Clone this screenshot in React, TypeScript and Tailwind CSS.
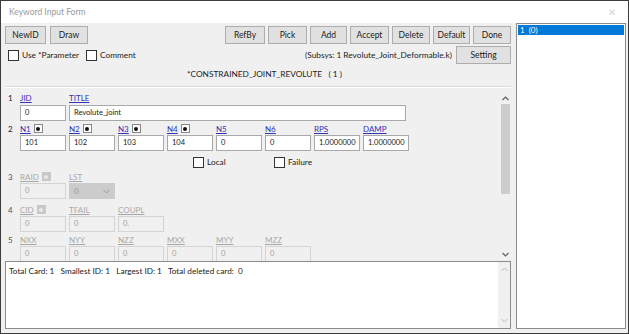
import React from "react";

const font = "font-['Lato','Noto_Sans',sans-serif]";

function Btn({ label, w }: { label: string; w: string }) {
  return (
    <div
      className={`${w} h-[18px] flex items-center justify-center bg-[#e1e1e1] border border-[#adadad] text-[8.5px] text-[#222]`}
    >
      {label}
    </div>
  );
}

function Check({ label, w }: { label: string; w?: string }) {
  return (
    <div className={`${w ?? ""} flex items-center gap-[3px] text-[8.3px] text-[#222]`}>
      <div className="w-[11px] h-[11px] bg-white border border-[#333]" />
      <span>{label}</span>
    </div>
  );
}

type Field = { name: string; value?: string; pick?: boolean; disabled?: boolean; select?: boolean };

function Label({ f }: { f: Field }) {
  return (
    <div className="w-[49px] h-[11px] flex items-center gap-[3px] text-[8px] leading-none">
      <span className={`underline ${f.disabled ? "text-[#a8a8a8]" : "text-[#3232b4]"}`}>
        {f.name}
      </span>
      {f.pick && (
        <span
          className={`w-[9px] h-[9px] flex items-center justify-center border ${
            f.disabled ? "bg-[#c8c8c8] border-[#c8c8c8]" : "bg-white border-[#888]"
          }`}
        >
          <span
            className={`w-[4px] h-[4px] rounded-full ${f.disabled ? "bg-[#e8e8e8]" : "bg-[#111]"}`}
          />
        </span>
      )}
    </div>
  );
}

function Input({ f }: { f: Field }) {
  if (f.select) {
    return (
      <div className="w-[46px] h-[16px] mr-[3px] flex items-center justify-between px-[4px] bg-[#cccccc] border border-[#cccccc] text-[8px] text-[#999]">
        <span>{f.value}</span>
        <svg width="7" height="5" viewBox="0 0 7 5">
          <path d="M0.5 1 L3.5 4 L6.5 1" fill="none" stroke="#999" strokeWidth="1" />
        </svg>
      </div>
    );
  }
  return (
    <div
      className={`w-[46px] h-[16px] mr-[3px] flex items-center px-[4px] border text-[7.5px] ${
        f.disabled
          ? "bg-[#f0f0f0] border-[#d4d4d4] text-[#a0a0a0]"
          : "bg-white border-[#a8a8a8] text-[#222]"
      }`}
    >
      {f.value}
    </div>
  );
}

function CardRow({ n, fields, disabled }: { n: string; fields: Field[]; disabled?: boolean }) {
  return (
    <div className="flex flex-col shrink-0">
      <div className="flex items-center h-[11px]">
        <span className={`w-[15px] pl-[3px] text-[8px] ${disabled ? "text-[#555]" : "text-[#222]"}`}>
          {n}
        </span>
        {fields.map((f) => (
          <Label key={f.name} f={f} />
        ))}
      </div>
      <div className="flex mt-[1px] pl-[15px]">
        {fields.map((f) => (
          <Input key={f.name} f={f} />
        ))}
      </div>
    </div>
  );
}

export default function App() {
  const row2: Field[] = [
    { name: "N1", value: "101", pick: true },
    { name: "N2", value: "102", pick: true },
    { name: "N3", value: "103", pick: true },
    { name: "N4", value: "104", pick: true },
    { name: "N5", value: "0" },
    { name: "N6", value: "0" },
    { name: "RPS", value: "1.0000000" },
    { name: "DAMP", value: "1.0000000" },
  ];
  const row3: Field[] = [
    { name: "RAID", value: "0", pick: true, disabled: true },
    { name: "LST", value: "0", disabled: true, select: true },
  ];
  const row4: Field[] = [
    { name: "CID", value: "0", pick: true, disabled: true },
    { name: "TFAIL", value: "0", disabled: true },
    { name: "COUPL", value: "0.", disabled: true },
  ];
  const row5: Field[] = ["NXX", "NYY", "NZZ", "MXX", "MYY", "MZZ"].map((name) => ({
    name,
    value: "0",
    disabled: true,
  }));

  return (
    <div
      className={`w-[629px] h-[334px] flex flex-col bg-[#f0f0f0] border border-[#3c3c3c] overflow-hidden ${font}`}
    >
      {/* title bar */}
      <div className="h-[22px] flex items-center justify-between bg-white px-[8px]">
        <span className="text-[8.5px] text-[#9a9a9a]">Keyword Input Form</span>
        <span className="text-[10px] text-[#d4d4d4] mr-[4px]">✕</span>
      </div>

      <div className="flex-1 flex min-h-0">
        {/* left column */}
        <div className="w-[511px] flex flex-col pl-[4px]">
          <div className="flex items-center justify-between mt-[3px] pr-[1px]">
            <div className="flex gap-[4px]">
              <Btn label="NewID" w="w-[41px]" />
              <Btn label="Draw" w="w-[38px]" />
            </div>
            <div className="flex gap-[3px]">
              <Btn label="RefBy" w="w-[40px]" />
              <Btn label="Pick" w="w-[39px]" />
              <Btn label="Add" w="w-[37px]" />
              <Btn label="Accept" w="w-[39px]" />
              <Btn label="Delete" w="w-[38px]" />
              <Btn label="Default" w="w-[37px]" />
              <Btn label="Done" w="w-[38px]" />
            </div>
          </div>

          <div className="flex items-center justify-between mt-[2px] pl-[3px] pr-[1px]">
            <div className="flex">
              <Check label="Use *Parameter" w="w-[78px]" />
              <Check label="Comment" />
            </div>
            <div className="flex items-center gap-[4px]">
              <span className="text-[8.3px] text-[#222]">(Subsys: 1 Revolute_Joint_Deformable.k)</span>
              <Btn label="Setting" w="w-[55px]" />
            </div>
          </div>

          <div className="h-[20px] flex items-center justify-center text-[8.3px] text-[#222] pl-[12px]">
            *CONSTRAINED_JOINT_REVOLUTE&nbsp;&nbsp;&nbsp;( 1 )
          </div>

          <div className="h-[2px] border-t border-[#d8d8d8] border-b border-b-white mt-[2px] mr-[1px]" />

          {/* scroll area */}
          <div className="flex-1 flex min-h-0 mt-[3px]">
            <div className="flex-1 flex flex-col gap-[2px] pt-[1px] overflow-hidden">
              <div className="flex flex-col shrink-0">
                <div className="flex items-center h-[11px]">
                  <span className="w-[15px] pl-[3px] text-[8px] text-[#222]">1</span>
                  <Label f={{ name: "JID" }} />
                  <Label f={{ name: "TITLE" }} />
                </div>
                <div className="flex mt-[2px] pl-[15px]">
                  <Input f={{ name: "JID", value: "0" }} />
                  <div className="w-[337px] h-[16px] flex items-center px-[4px] bg-white border border-[#a8a8a8] text-[7.5px] text-[#222]">
                    Revolute_joint
                  </div>
                </div>
              </div>
              <CardRow n="2" fields={row2} />
              <div className="flex h-[12px] shrink-0 items-center pl-[188px] mt-[3px] mb-[1px]">
                <Check label="Local" w="w-[81px]" />
                <Check label="Failure" />
              </div>
              <CardRow n="3" fields={row3} disabled />
              <div className="h-[1px] shrink-0" />
              <CardRow n="4" fields={row4} disabled />
              <CardRow n="5" fields={row5} disabled />
            </div>
            <div className="w-[13px] flex flex-col items-center">
              <svg width="7" height="5" viewBox="0 0 7 5" className="mt-[5px]">
                <path d="M0.5 4 L3.5 1 L6.5 4" fill="none" stroke="#606060" strokeWidth="1.2" />
              </svg>
              <div className="w-[9px] h-[90px] bg-[#cdcdcd] mt-[3px]" />
              <div className="flex-1" />
              <svg width="7" height="5" viewBox="0 0 7 5" className="mb-[4px]">
                <path d="M0.5 1 L3.5 4 L6.5 1" fill="none" stroke="#606060" strokeWidth="1.2" />
              </svg>
            </div>
          </div>

          {/* message box */}
          <div className="h-[68px] shrink-0 flex bg-white border border-[#8c8c8c] mb-[4px] mr-[1px]">
            <div className="flex-1 pl-[3px] pt-[3px] text-[8.2px] text-[#222] whitespace-pre">
              {"Total Card: 1   Smallest ID: 1   Largest ID: 1   Total deleted card:  0"}
            </div>
            <div className="w-[12px] flex flex-col items-center justify-between py-[5px] bg-[#f0f0f0]">
              <svg width="7" height="5" viewBox="0 0 7 5">
                <path d="M0.5 4 L3.5 1 L6.5 4" fill="none" stroke="#bbbbbb" strokeWidth="1" />
              </svg>
              <svg width="7" height="5" viewBox="0 0 7 5">
                <path d="M0.5 1 L3.5 4 L6.5 1" fill="none" stroke="#bbbbbb" strokeWidth="1" />
              </svg>
            </div>
          </div>
        </div>

        {/* list box */}
        <div className="w-[110px] ml-[4px] mb-[4px] mr-[2px] bg-white border border-[#8c8c8c] p-[1px]">
          <div className="h-[10px] flex items-center bg-[#0078d7] text-white text-[8px] px-[2px] whitespace-pre">
            {"1  (0)"}
          </div>
        </div>
      </div>
    </div>
  );
}
